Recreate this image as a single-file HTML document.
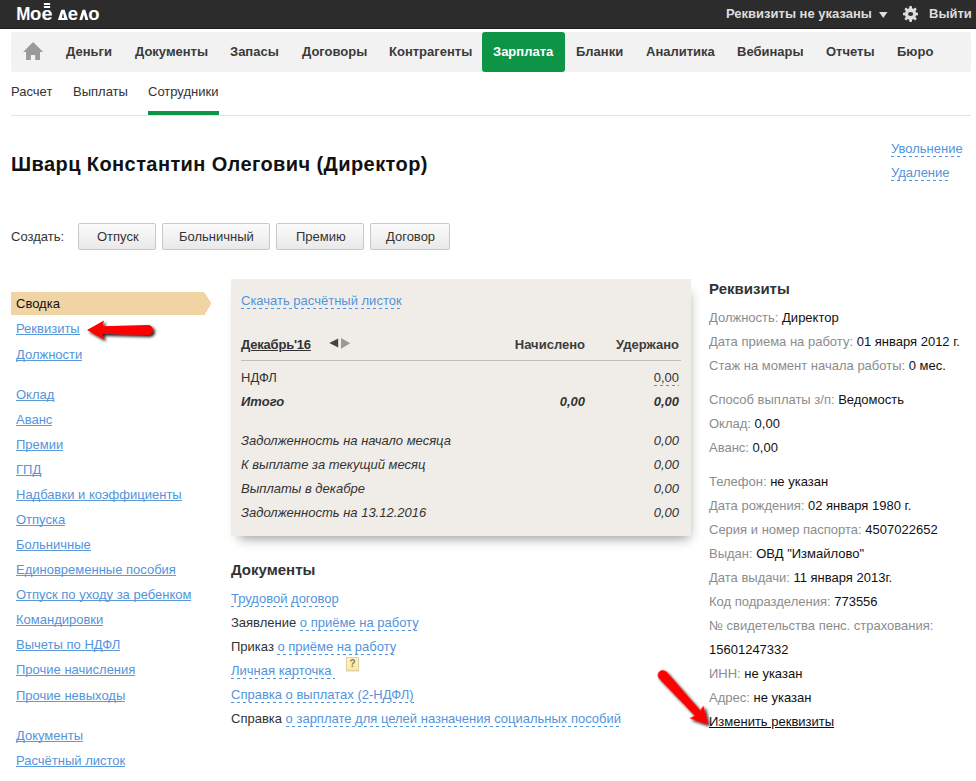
<!DOCTYPE html>
<html><head><meta charset="utf-8">
<style>
*{margin:0;padding:0;box-sizing:border-box}
html,body{width:976px;height:781px;overflow:hidden;background:#fff}
body{position:relative;font:13px "Liberation Sans",sans-serif;color:#333}
.a{position:absolute;white-space:nowrap;line-height:20px}
.b{font-weight:bold}
#hdr{position:absolute;left:0;top:0;width:976px;height:29px;background:#2c2c2c;border-bottom:1px solid #1c1c1c}
#nav{position:absolute;left:11px;top:32px;width:960px;height:40px;background:#f2f2f2;border-radius:3px}
.ni{color:#3a3a3a;font-weight:bold;top:42px}
#green{position:absolute;left:482px;top:32px;width:83px;height:40px;background:#0e9447;border-radius:3px}
.lnk{color:#5394dc}
.u{text-decoration:underline}
.dl::after{content:'';position:absolute;left:0;right:0;top:17px;height:1px;background:repeating-linear-gradient(90deg,#4f93dc 0 3px,transparent 3px 6px)}
.sl::after{content:'';position:absolute;left:0;right:0;top:15px;height:1px;background:#5c9ad8}
.btn{position:absolute;top:223px;height:27px;border:1px solid #c9c9c9;border-radius:2px;background:linear-gradient(#fbfbfb,#e9e9e9);}
.lbl{color:#8c8c8c}
.val{color:#111}
</style></head><body>
<div id="hdr"></div>
<svg style="position:absolute;left:0;top:0" width="110" height="28" fill="#fff" font-family="Liberation Sans" font-weight="bold" font-size="18.5">
<text transform="translate(16.3 19.9) scale(0.92 1)">М</text><text x="30.1" y="19.9">о</text><text transform="translate(41.5 19.9) scale(1.07 1)">е</text><text x="67.8" y="19.9">е</text><text x="88.3" y="19.9">о</text>
<rect x="43.9" y="3" width="6.2" height="2"/><rect x="43.9" y="6" width="6.2" height="2"/>
<path fill-rule="evenodd" d="M61.3 9.7H64.6L67.9 19.9H57.9ZM62.7 13.6H63.3L64 17.9H62Z"/>
<path d="M82.5 9.7H85.3L88.4 19.9H85.4L83.9 14.3L82.2 19.9H79.3Z"/>
</svg>
<div class="a b" style="left:726px;top:4px;color:#ddd">Реквизиты не указаны</div>
<svg style="position:absolute;left:879px;top:12px" width="9" height="6"><path d="M0 0H8.5L4.25 6Z" fill="#ddd"/></svg>
<svg style="position:absolute;left:903px;top:6.2px" width="15.2" height="16" viewBox="0 0 16 16" preserveAspectRatio="none"><path fill="#ddd" fill-rule="evenodd" d="M6.8 0h2.4l.4 2.3 1.3.6 1.9-1.4 1.7 1.7-1.4 1.9.6 1.3 2.3.4v2.4l-2.3.4-.6 1.3 1.4 1.9-1.7 1.7-1.9-1.4-1.3.6-.4 2.3H6.8l-.4-2.3-1.3-.6-1.9 1.4-1.7-1.7 1.4-1.9-.6-1.3L0 9.2V6.8l2.3-.4.6-1.3-1.4-1.9 1.7-1.7 1.9 1.4 1.3-.6zM8 5.9A2.7 2.1 0 1 0 8 10.1 2.7 2.1 0 1 0 8 5.9z"/></svg>
<div class="a b" style="left:929px;top:4px;color:#ddd">Выйти</div>

<div id="nav"></div>
<svg style="position:absolute;left:23px;top:42px" width="21" height="19" viewBox="0 0 21 19"><path d="M10.1 0L20.1 10H17V18H12.2V13H7.8V18H3.1V10H0.1Z" fill="#9a9a9a"/></svg>
<div id="green"></div>
<div class="a ni" style="left:66px">Деньги</div>
<div class="a ni" style="left:135px">Документы</div>
<div class="a ni" style="left:230px">Запасы</div>
<div class="a ni" style="left:302px">Договоры</div>
<div class="a ni" style="left:389px">Контрагенты</div>
<div class="a ni" style="left:493px;color:#fff">Зарплата</div>
<div class="a ni" style="left:576px">Бланки</div>
<div class="a ni" style="left:646px">Аналитика</div>
<div class="a ni" style="left:737px">Вебинары</div>
<div class="a ni" style="left:826px">Отчеты</div>
<div class="a ni" style="left:897px">Бюро</div>

<div class="a" style="left:11px;top:82px">Расчет</div>
<div class="a" style="left:73px;top:82px">Выплаты</div>
<div class="a" style="left:148px;top:82px">Сотрудники</div>
<div style="position:absolute;left:148px;top:111px;width:71px;height:4px;background:#0e9447"></div>
<div style="position:absolute;left:11px;top:115px;width:960px;height:1px;background:#e3e3e3"></div>

<div class="a b" style="left:11px;top:154px;font-size:20px;color:#111;line-height:20px;letter-spacing:0.42px">Шварц Константин Олегович (Директор)</div>
<div class="a lnk dl" style="left:891px;top:139px">Увольнение</div>
<div class="a lnk dl" style="left:891px;top:163px">Удаление</div>

<div class="a" style="left:11px;top:227px">Создать:</div>
<div class="btn" style="left:78px;width:78px"></div>
<div class="btn" style="left:162px;width:108px"></div>
<div class="btn" style="left:276px;width:88px"></div>
<div class="btn" style="left:370px;width:80px"></div>
<div class="a" style="left:97px;top:227px">Отпуск</div>
<div class="a" style="left:179px;top:227px">Больничный</div>
<div class="a" style="left:296px;top:227px">Премию</div>
<div class="a" style="left:386px;top:227px">Договор</div>

<!-- sidebar -->
<svg style="position:absolute;left:11px;top:292px" width="201" height="23" shape-rendering="crispEdges"><path d="M0 0H193L200.5 11.5L193.5 23H0Z" fill="#f0d4a4"/></svg>
<div class="a" style="left:16px;top:294px;color:#111">Сводка</div>
<div class="a lnk sl" style="left:16px;top:319px">Реквизиты</div>
<div class="a lnk sl" style="left:16px;top:345px">Должности</div>
<div class="a lnk sl" style="left:16px;top:385px">Оклад</div>
<div class="a lnk sl" style="left:16px;top:410px">Аванс</div>
<div class="a lnk sl" style="left:16px;top:435px">Премии</div>
<div class="a lnk sl" style="left:16px;top:460px">ГПД</div>
<div class="a lnk sl" style="left:16px;top:485px">Надбавки и коэффициенты</div>
<div class="a lnk sl" style="left:16px;top:510px">Отпуска</div>
<div class="a lnk sl" style="left:16px;top:535px">Больничные</div>
<div class="a lnk sl" style="left:16px;top:560px">Единовременные пособия</div>
<div class="a lnk sl" style="left:16px;top:585px">Отпуск по уходу за ребенком</div>
<div class="a lnk sl" style="left:16px;top:610px">Командировки</div>
<div class="a lnk sl" style="left:16px;top:635px">Вычеты по НДФЛ</div>
<div class="a lnk sl" style="left:16px;top:660px">Прочие начисления</div>
<div class="a lnk sl" style="left:16px;top:686px">Прочие невыходы</div>
<div class="a lnk sl" style="left:16px;top:726px">Документы</div>
<div class="a lnk sl" style="left:16px;top:751px">Расчётный листок</div>

<!-- panel -->
<div style="position:absolute;left:231px;top:279px;width:460px;height:257px;background:#f0ede9;box-shadow:3px 7.5px 11px -5px rgba(0,0,0,.4)"></div>
<div class="a lnk dl" style="left:241px;top:291px">Скачать расчётный листок</div>
<div class="a b u" style="left:241px;top:335px;color:#333;letter-spacing:-0.2px">Декабрь'16</div>
<svg style="position:absolute;left:329px;top:338px" width="22" height="11"><path d="M0.3 4.9L9.2 0.5V9.4Z" fill="#444"/><path d="M12 0L21.2 5.35L12 10.7Z" fill="#999"/></svg>
<div class="a b" style="right:391px;top:335px;color:#3c3c3c">Начислено</div>
<div class="a b" style="right:297px;top:335px;color:#3c3c3c">Удержано</div>
<div style="position:absolute;left:241px;top:360px;width:440px;height:1px;background:#bdbdbd"></div>
<div class="a" style="left:241px;top:368px">НДФЛ</div>
<div class="a dl" style="right:297px;top:368px">0,00</div>
<div class="a b" style="left:241px;top:392px;font-style:italic">Итого</div>
<div class="a b" style="right:391px;top:392px;font-style:italic">0,00</div>
<div class="a b" style="right:297px;top:392px;font-style:italic">0,00</div>
<div class="a" style="left:241px;top:431px;font-style:italic">Задолженность на начало месяца</div>
<div class="a" style="right:297px;top:431px;font-style:italic">0,00</div>
<div class="a" style="left:241px;top:455px;font-style:italic">К выплате за текущий месяц</div>
<div class="a" style="right:297px;top:455px;font-style:italic">0,00</div>
<div class="a" style="left:241px;top:479px;font-style:italic">Выплаты в декабре</div>
<div class="a" style="right:297px;top:479px;font-style:italic">0,00</div>
<div class="a" style="left:241px;top:503px;font-style:italic">Задолженность на 13.12.2016</div>
<div class="a" style="right:297px;top:503px;font-style:italic">0,00</div>

<!-- documents -->
<div class="a b" style="left:231px;top:560px;font-size:15px;color:#333">Документы</div>
<div class="a lnk dl" style="left:231px;top:589px">Трудовой договор</div>
<div class="a" style="left:231px;top:613px">Заявление <span class="lnk dl" style="position:relative;display:inline-block;line-height:20px">о приёме на работу</span></div>
<div class="a" style="left:231px;top:637px">Приказ <span class="lnk dl" style="position:relative;display:inline-block;line-height:20px">о приёме на работу</span></div>
<div class="a lnk dl" style="left:231px;top:661px">Личная карточка&nbsp;</div>
<div style="position:absolute;left:346px;top:657px;width:13px;height:14px;background:linear-gradient(#fdf3bf,#fbe9a0);border:1px solid #dcd2a4;box-shadow:0 1px 1px rgba(0,0,0,.08);font:bold 10px 'Liberation Sans',sans-serif;color:#8d7d3e;text-align:center;line-height:12px">?</div>
<div class="a lnk dl" style="left:231px;top:685px">Справка о выплатах (2-НДФЛ)</div>
<div class="a" style="left:231px;top:709px">Справка <span class="lnk dl" style="position:relative;display:inline-block;line-height:20px">о зарплате для целей назначения социальных пособий</span></div>

<!-- right column -->
<div class="a b" style="left:709px;top:279px;font-size:15px;color:#333">Реквизиты</div>
<div class="a" style="left:709px;top:308px"><span class="lbl">Должность:</span> <span class="val">Директор</span></div>
<div class="a" style="left:709px;top:332px"><span class="lbl">Дата приема на работу:</span> <span class="val">01 января 2012 г.</span></div>
<div class="a" style="left:709px;top:356px"><span class="lbl">Стаж на момент начала работы:</span> <span class="val">0 мес.</span></div>
<div class="a" style="left:709px;top:390px"><span class="lbl">Способ выплаты з/п:</span> <span class="val">Ведомость</span></div>
<div class="a" style="left:709px;top:414px"><span class="lbl">Оклад:</span> <span class="val">0,00</span></div>
<div class="a" style="left:709px;top:438px"><span class="lbl">Аванс:</span> <span class="val">0,00</span></div>
<div class="a" style="left:709px;top:472px"><span class="lbl">Телефон:</span> <span class="val">не указан</span></div>
<div class="a" style="left:709px;top:496px"><span class="lbl">Дата рождения:</span> <span class="val">02 января 1980 г.</span></div>
<div class="a" style="left:709px;top:520px"><span class="lbl">Серия и номер паспорта:</span> <span class="val">4507022652</span></div>
<div class="a" style="left:709px;top:544px"><span class="lbl">Выдан:</span> <span class="val">ОВД "Измайлово"</span></div>
<div class="a" style="left:709px;top:568px"><span class="lbl">Дата выдачи:</span> <span class="val">11 января 2013г.</span></div>
<div class="a" style="left:709px;top:592px"><span class="lbl">Код подразделения:</span> <span class="val">773556</span></div>
<div class="a" style="left:709px;top:616px"><span class="lbl">№ свидетельства пенс. страхования:</span></div>
<div class="a val" style="left:709px;top:640px">15601247332</div>
<div class="a" style="left:709px;top:664px"><span class="lbl">ИНН:</span> <span class="val">не указан</span></div>
<div class="a" style="left:709px;top:688px"><span class="lbl">Адрес:</span> <span class="val">не указан</span></div>
<div class="a val u" style="left:709px;top:712px">Изменить реквизиты</div>

<!-- red arrows -->
<svg style="position:absolute;left:0;top:0" width="976" height="781">
<defs><filter id="sh" x="-30%" y="-30%" width="160%" height="160%"><feGaussianBlur in="SourceAlpha" stdDeviation="1.6"/><feOffset dx="2" dy="2"/><feComponentTransfer><feFuncA type="linear" slope="0.9"/></feComponentTransfer><feMerge><feMergeNode/><feMergeNode in="SourceGraphic"/></feMerge></filter></defs>
<g filter="url(#sh)" fill="#f00">
<path transform="translate(87 330)" d="M0 0L17-9.6L15.5-3.8L61-5A5 5 0 0 1 61 5L15.5 3.8L17 9.6Z"/>
<path transform="translate(708 724.5) rotate(227.5)" d="M0 0L17-9.6L15.5-3.8L67-5A5 5 0 0 1 67 5L15.5 3.8L17 9.6Z"/>
</g>
</svg>
</body></html>
